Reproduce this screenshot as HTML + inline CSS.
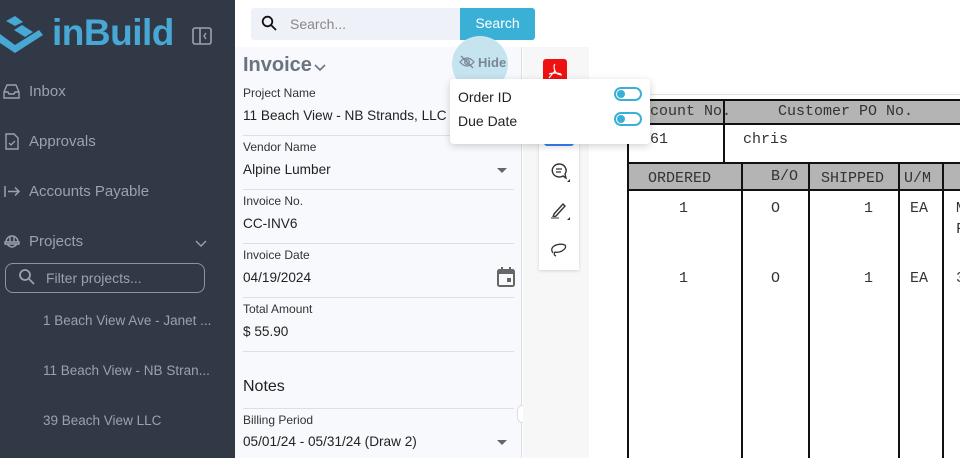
<!DOCTYPE html>
<html><head><meta charset="utf-8"><style>
*{box-sizing:border-box;margin:0;padding:0}
body{width:960px;height:458px;overflow:hidden;position:relative;font-family:"Liberation Sans",Arial,sans-serif;background:#fff}
.a{position:absolute}
#sb{left:0;top:0;width:235px;height:458px;background:#323946;color:#9ba2ae}
.nav{position:absolute;left:29px;font-size:15px}
.proj{position:absolute;left:43px;font-size:13.5px;color:#9ba2ae}
#form{left:235px;top:47px;width:287px;height:411px;background:#f8f9fd;border-right:1px solid #dcdfe5}
.lbl{position:absolute;left:8px;font-size:12px;color:#333}
.val{position:absolute;left:8px;font-size:13.6px;color:#222}
.hr{position:absolute;left:8px;width:271px;height:1px;background:#dcdfe4}
.mono{font-family:"Liberation Mono",monospace;font-size:15px;color:#333;position:absolute}
.vl{position:absolute;width:2px;background:#111}
.hl{position:absolute;height:2px;background:#111}
</style></head><body>
<div id="sb" class="a">
  <svg class="a" style="left:0;top:16px" width="44" height="40" viewBox="0 0 44 40"><path d="M0 18 L15 29 L39 14 L43 19 L15 37 L0 27Z" fill="#47a8d6"/><path d="M6 5 L15 0 L23 6 L15 10Z" fill="#47a8d6"/><path d="M14 14 L22 9 L33 16 L25 21Z" fill="#47a8d6"/></svg>
  <div class="a" style="left:52px;top:12px;font-size:37px;font-weight:bold;color:#47a8d6;letter-spacing:-0.5px">inBuild</div>
  <svg class="a" style="left:192px;top:27px" width="20" height="18" viewBox="0 0 20 18"><rect x="1" y="1" width="18" height="16" rx="2" fill="none" stroke="#9ba2ae" stroke-width="1.6"/><line x1="8" y1="1" x2="8" y2="17" stroke="#9ba2ae" stroke-width="1.6"/><path d="M14 6 L12 9 L14 12" fill="none" stroke="#9ba2ae" stroke-width="1.4"/></svg>
  <svg class="a" style="left:3px;top:84px" width="17" height="15" viewBox="0 0 17 15"><path d="M1 8 L4 1 H13 L16 8 V14 H1Z M1 8 H5 L6 10 H11 L12 8 H16" fill="none" stroke="#9ba2ae" stroke-width="1.4"/></svg>
  <div class="nav" style="top:83px">Inbox</div>
  <svg class="a" style="left:5px;top:133px" width="14" height="17" viewBox="0 0 14 17"><path d="M1 1 H9 L13 5 V16 H1Z" fill="none" stroke="#9ba2ae" stroke-width="1.4"/><path d="M4 10 L6 12 L10 8" fill="none" stroke="#9ba2ae" stroke-width="1.3"/></svg>
  <div class="nav" style="top:133px">Approvals</div>
  <svg class="a" style="left:4px;top:185px" width="17" height="13" viewBox="0 0 17 13"><path d="M1 1 V12 M4 6.5 H15 M11 2.5 L15 6.5 L11 10.5" fill="none" stroke="#9ba2ae" stroke-width="1.5"/></svg>
  <div class="nav" style="top:183px">Accounts Payable</div>
  <svg class="a" style="left:4px;top:233px" width="16" height="17" viewBox="0 0 16 17"><path d="M2 9 A6 6 0 0 1 14 9 M1 9 H15 V11 H1Z M3 11 Q8 17 13 11 M6 3 V9 M10 3 V9" fill="none" stroke="#9ba2ae" stroke-width="1.4"/></svg>
  <div class="nav" style="top:233px">Projects</div>
  <svg class="a" style="left:195px;top:240px" width="12" height="8" viewBox="0 0 12 8"><path d="M1 1 L6 6 L11 1" fill="none" stroke="#9ba2ae" stroke-width="1.4"/></svg>
  <div class="a" style="left:5px;top:263px;width:200px;height:30px;border:1px solid #8d94a0;border-radius:8px"></div>
  <svg class="a" style="left:18px;top:268px" width="18" height="18" viewBox="0 0 18 18"><circle cx="7" cy="7" r="5" fill="none" stroke="#9ba2ae" stroke-width="1.8"/><line x1="11" y1="11" x2="16" y2="16" stroke="#9ba2ae" stroke-width="1.8"/></svg>
  <div class="a" style="left:46px;top:270px;font-size:14px;color:#9ba2ae">Filter projects...</div>
  <div class="proj" style="top:313px">1 Beach View Ave - Janet ...</div>
  <div class="proj" style="top:363px">11 Beach View - NB Stran...</div>
  <div class="proj" style="top:413px">39 Beach View LLC</div>
</div>
<div class="a" style="left:251px;top:8px;width:210px;height:32px;background:#eef1f8;border-radius:3px 0 0 3px"></div>
<svg class="a" style="left:261px;top:15px" width="16" height="16" viewBox="0 0 16 16"><circle cx="6.5" cy="6.5" r="4.8" fill="none" stroke="#111" stroke-width="1.8"/><line x1="10" y1="10" x2="15" y2="15" stroke="#111" stroke-width="1.8"/></svg>
<div class="a" style="left:290px;top:16px;font-size:14px;color:#888">Search...</div>
<div class="a" style="left:460px;top:8px;width:75px;height:32px;background:#3bb0d6;color:#fff;font-size:14px;text-align:center;line-height:30px;border-radius:0 3px 3px 0">Search</div>
<div id="form" class="a">
  <div class="a" style="left:8px;top:7px;font-size:20px;font-weight:bold;color:#6b7280">Invoice</div>
  <svg class="a" style="left:79px;top:17px" width="12" height="8" viewBox="0 0 12 8"><path d="M1 1 L6 6 L11 1" fill="none" stroke="#6b7280" stroke-width="1.6"/></svg>
  <div class="a" style="left:217px;top:-11px;width:56px;height:56px;border-radius:50%;background:#c6e4f0"></div>
  <svg class="a" style="left:224px;top:8px" width="16" height="14" viewBox="0 0 16 14"><path d="M1 7 Q8 -1 15 7 Q8 15 1 7Z" fill="none" stroke="#7a8694" stroke-width="1.3"/><circle cx="8" cy="7" r="2.3" fill="none" stroke="#7a8694" stroke-width="1.3"/><line x1="2" y1="1" x2="14" y2="13" stroke="#7a8694" stroke-width="1.3"/></svg>
  <div class="a" style="left:243px;top:8px;font-size:13px;font-weight:bold;color:#7a8694">Hide</div>
  <div class="lbl" style="top:39px">Project Name</div>
  <div class="val" style="top:61px">11 Beach View - NB Strands, LLC</div>
  <div class="hr" style="top:88px"></div>
  <div class="lbl" style="top:93px">Vendor Name</div>
  <div class="val" style="top:115px">Alpine Lumber</div>
  <svg class="a" style="left:262px;top:121px" width="10" height="5"><path d="M0 0 H10 L5 5Z" fill="#666"/></svg>
  <div class="hr" style="top:142px"></div>
  <div class="lbl" style="top:147px">Invoice No.</div>
  <div class="val" style="top:169px">CC-INV6</div>
  <div class="hr" style="top:196px"></div>
  <div class="lbl" style="top:201px">Invoice Date</div>
  <div class="val" style="top:223px">04/19/2024</div>
  <svg class="a" style="left:262px;top:220px" width="18" height="20" viewBox="0 0 18 20"><rect x="1" y="3" width="16" height="16" rx="1.5" fill="none" stroke="#666" stroke-width="2"/><rect x="1" y="3" width="16" height="4" fill="#666"/><rect x="4" y="0" width="2" height="4" fill="#666"/><rect x="12" y="0" width="2" height="4" fill="#666"/><rect x="10" y="11" width="4" height="4" fill="#666"/></svg>
  <div class="hr" style="top:250px"></div>
  <div class="lbl" style="top:255px">Total Amount</div>
  <div class="val" style="top:277px">$ 55.90</div>
  <div class="hr" style="top:304px"></div>
  <div class="a" style="left:8px;top:331px;font-size:16px;color:#222">Notes</div>
  <div class="hr" style="top:361px"></div>
  <div class="lbl" style="top:366px">Billing Period</div>
  <div class="val" style="top:387px">05/01/24 - 05/31/24 (Draw 2)</div>
  <svg class="a" style="left:262px;top:393px" width="10" height="5"><path d="M0 0 H10 L5 5Z" fill="#666"/></svg>
</div>
<div class="a" style="left:517px;top:405px;width:11px;height:18px;border:1px solid #ddd;border-radius:6px;background:#fff"></div>
<div class="a" style="left:523px;top:47px;width:437px;height:411px;background:#f7f7f7"></div>
<div class="a" style="left:589px;top:47px;width:371px;height:411px;background:#fff"></div>
<div class="a" style="left:648px;top:94px;width:312px;height:1px;background:#e2e2e2"></div>
<div class="a" style="left:543px;top:59px;width:24px;height:24px;background:#ee1111;border-radius:3px"></div>
<svg class="a" style="left:546px;top:62px" width="18" height="18" viewBox="0 0 18 18"><path d="M9 2 Q7 4 9 9 Q11 13 16 13 M9 9 Q6 12 3 16 M3 12 Q9 10 15 12" fill="none" stroke="#fff" stroke-width="1.2"/></svg>
<div class="a" style="left:539px;top:140px;width:40px;height:130px;background:#fff;box-shadow:0 1px 3px rgba(0,0,0,.15)"></div>
<div class="a" style="left:544px;top:140px;width:30px;height:6px;background:#3b82f6;border-radius:0 0 3px 3px"></div>
<svg class="a" style="left:550px;top:162px" width="20" height="20" viewBox="0 0 20 20"><path d="M9 2 A7 6.5 0 1 0 13 14 L16 16 L15 12 A7 6.5 0 0 0 9 2Z" fill="none" stroke="#333" stroke-width="1.4"/><path d="M6 7 H12 M6 10 H11" stroke="#333" stroke-width="1.3"/><path d="M20 17 V20 H17Z" fill="#333"/></svg>
<svg class="a" style="left:550px;top:200px" width="20" height="20" viewBox="0 0 20 20"><path d="M4 14 L13 4 L15 6 L6 16 L3 17Z" fill="none" stroke="#333" stroke-width="1.4"/><path d="M1 18 H9" stroke="#999" stroke-width="2"/><path d="M20 17 V20 H17Z" fill="#333"/></svg>
<svg class="a" style="left:550px;top:241px" width="18" height="16" viewBox="0 0 18 16"><path d="M3 12 Q0 8 4 5 Q10 2 15 4 Q17 7 12 10 Q8 12 5 11 Q3 14 6 15" fill="none" stroke="#333" stroke-width="1.3"/></svg>
<div class="a" style="left:628px;top:100px;width:332px;height:24px;background:#b4b4b4"></div>
<div class="a" style="left:628px;top:164px;width:332px;height:26px;background:#b4b4b4"></div>
<div class="hl" style="left:628px;top:99px;width:332px"></div>
<div class="hl" style="left:628px;top:123px;width:332px"></div>
<div class="hl" style="left:628px;top:162px;width:332px"></div>
<div class="hl" style="left:628px;top:189px;width:332px"></div>
<div class="vl" style="left:627px;top:99px;height:359px"></div>
<div class="vl" style="left:723px;top:99px;height:64px"></div>
<div class="vl" style="left:741px;top:163px;height:295px"></div>
<div class="vl" style="left:808px;top:163px;height:295px"></div>
<div class="vl" style="left:898px;top:163px;height:295px"></div>
<div class="vl" style="left:942px;top:163px;height:295px"></div>
<div class="mono" style="left:650px;top:103px">count No.</div>
<div class="mono" style="left:778px;top:103px">Customer PO No.</div>
<div class="mono" style="left:650px;top:131px">61</div>
<div class="mono" style="left:743px;top:131px">chris</div>
<div class="mono" style="left:648px;top:170px">ORDERED</div>
<div class="mono" style="left:771px;top:168px">B/O</div>
<div class="mono" style="left:821px;top:170px">SHIPPED</div>
<div class="mono" style="left:904px;top:170px">U/M</div>
<div class="mono" style="left:679px;top:200px">1</div>
<div class="mono" style="left:771px;top:200px">O</div>
<div class="mono" style="left:864px;top:200px">1</div>
<div class="mono" style="left:910px;top:200px">EA</div>
<div class="mono" style="left:956px;top:200px">M</div>
<div class="mono" style="left:956px;top:221px">F</div>
<div class="mono" style="left:679px;top:270px">1</div>
<div class="mono" style="left:771px;top:270px">O</div>
<div class="mono" style="left:864px;top:270px">1</div>
<div class="mono" style="left:910px;top:270px">EA</div>
<div class="mono" style="left:956px;top:270px">3</div>
<div class="a" style="left:450px;top:79px;width:200px;height:65px;background:#fff;border-radius:4px;box-shadow:0 2px 8px rgba(0,0,0,.18)"></div>
<div class="a" style="left:458px;top:89px;font-size:14px;color:#222">Order ID</div>
<div class="a" style="left:458px;top:113px;font-size:14px;color:#222">Due Date</div>
<div class="a" style="left:614px;top:87px;width:28px;height:14px;border:2px solid #3bb0d6;border-radius:7px"></div>
<div class="a" style="left:617px;top:90px;width:8px;height:8px;border-radius:50%;background:#3bb0d6"></div>
<div class="a" style="left:614px;top:112px;width:28px;height:14px;border:2px solid #3bb0d6;border-radius:7px"></div>
<div class="a" style="left:617px;top:115px;width:8px;height:8px;border-radius:50%;background:#3bb0d6"></div>
</body></html>
